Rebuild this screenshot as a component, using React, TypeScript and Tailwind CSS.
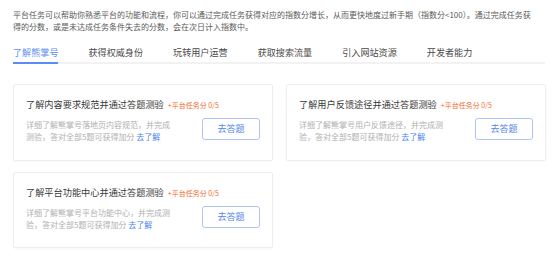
import React from 'react';

type Task = {
  title: string;
  lines: [string, string];
};

const TABS = ['了解熊掌号', '获得权威身份', '玩转用户运营', '获取搜索流量', '引入网站资源', '开发者能力'];

const TASKS: Task[] = [
  { title: '了解内容要求规范并通过答题测验', lines: ['详细了解熊掌号落地页内容规范，并完成', '测验，答对全部5题可获得加分'] },
  { title: '了解用户反馈途径并通过答题测验', lines: ['详细了解熊掌号用户反馈途径，并完成测', '验，答对全部5题可获得加分'] },
  { title: '了解平台功能中心并通过答题测验', lines: ['详细了解熊掌号平台功能中心，并完成测', '验，答对全部5题可获得加分'] },
];

const TaskCard: React.FC<{ task: Task }> = ({ task }) => (
  <div className="bg-white border border-[#eeeeee] rounded-[2px] shadow-[0_1px_2px_rgba(0,0,0,0.03)] pl-[12px] pr-[12px] pt-[13px]">
    <div className="flex items-baseline gap-[4px] h-[12px] leading-[12px]">
      <span className="text-[9.2px] text-[#3a3a3a]">{task.title}</span>
      <span className="text-[7px] text-[#f5692b]">+平台任务分 0/5</span>
    </div>
    <div className="flex items-start mt-[8px]">
      <p className="pt-[1px] text-[8px] leading-[12px] text-[#b0b0b0] whitespace-nowrap">
        {task.lines[0]}
        <br />
        {task.lines[1]} <span className="text-[#4a83f0]">去了解</span>
      </p>
      <button className="ml-auto w-[58px] h-[22px] border border-[#adc4f5] rounded-[3px] text-[9px] text-[#5586ea] bg-white">
        去答题
      </button>
    </div>
  </div>
);

export default function App() {
  return (
    <div
      className="w-[558px] h-[257px] bg-white pl-[13px] pt-[9px] overflow-hidden"
      style={{ fontFamily: '"Noto Sans CJK SC", "Noto Sans", sans-serif' }}
    >
      <p className="text-[8px] leading-[12px] text-[#5a5a5a] whitespace-nowrap">
        平台任务可以帮助你熟悉平台的功能和流程，你可以通过完成任务获得对应的指数分增长，从而更快地度过新手期（指数分&lt;100）。通过完成任务获
        <br />
        得的分数，或是未达成任务条件失去的分数，会在次日计入指数中。
      </p>

      <div className="mt-[13px] w-[532px] flex gap-[30px] border-b-2 border-[#f2f2f2]">
        {TABS.map((t, i) => (
          <div
            key={t}
            className={
              i === 0
                ? 'text-[9.1px] leading-[12px] pb-[4px] -mb-[2px] border-b-2 border-[#5b8cf5] text-[#5b8cf5]'
                : 'text-[9.1px] leading-[12px] pb-[4px] -mb-[2px] border-b-2 border-transparent text-[#4a4a4a]'
            }
          >
            {t}
          </div>
        ))}
      </div>

      <div className="mt-[20px] grid grid-cols-[260px_260px] gap-x-[13px] gap-y-[11px]">
        {TASKS.map((task, i) => (
          <div key={i} className={i === 2 ? 'h-[76px] flex flex-col [&>div]:flex-1' : 'h-[77px] flex flex-col [&>div]:flex-1'}>
            <TaskCard task={task} />
          </div>
        ))}
      </div>
    </div>
  );
}
